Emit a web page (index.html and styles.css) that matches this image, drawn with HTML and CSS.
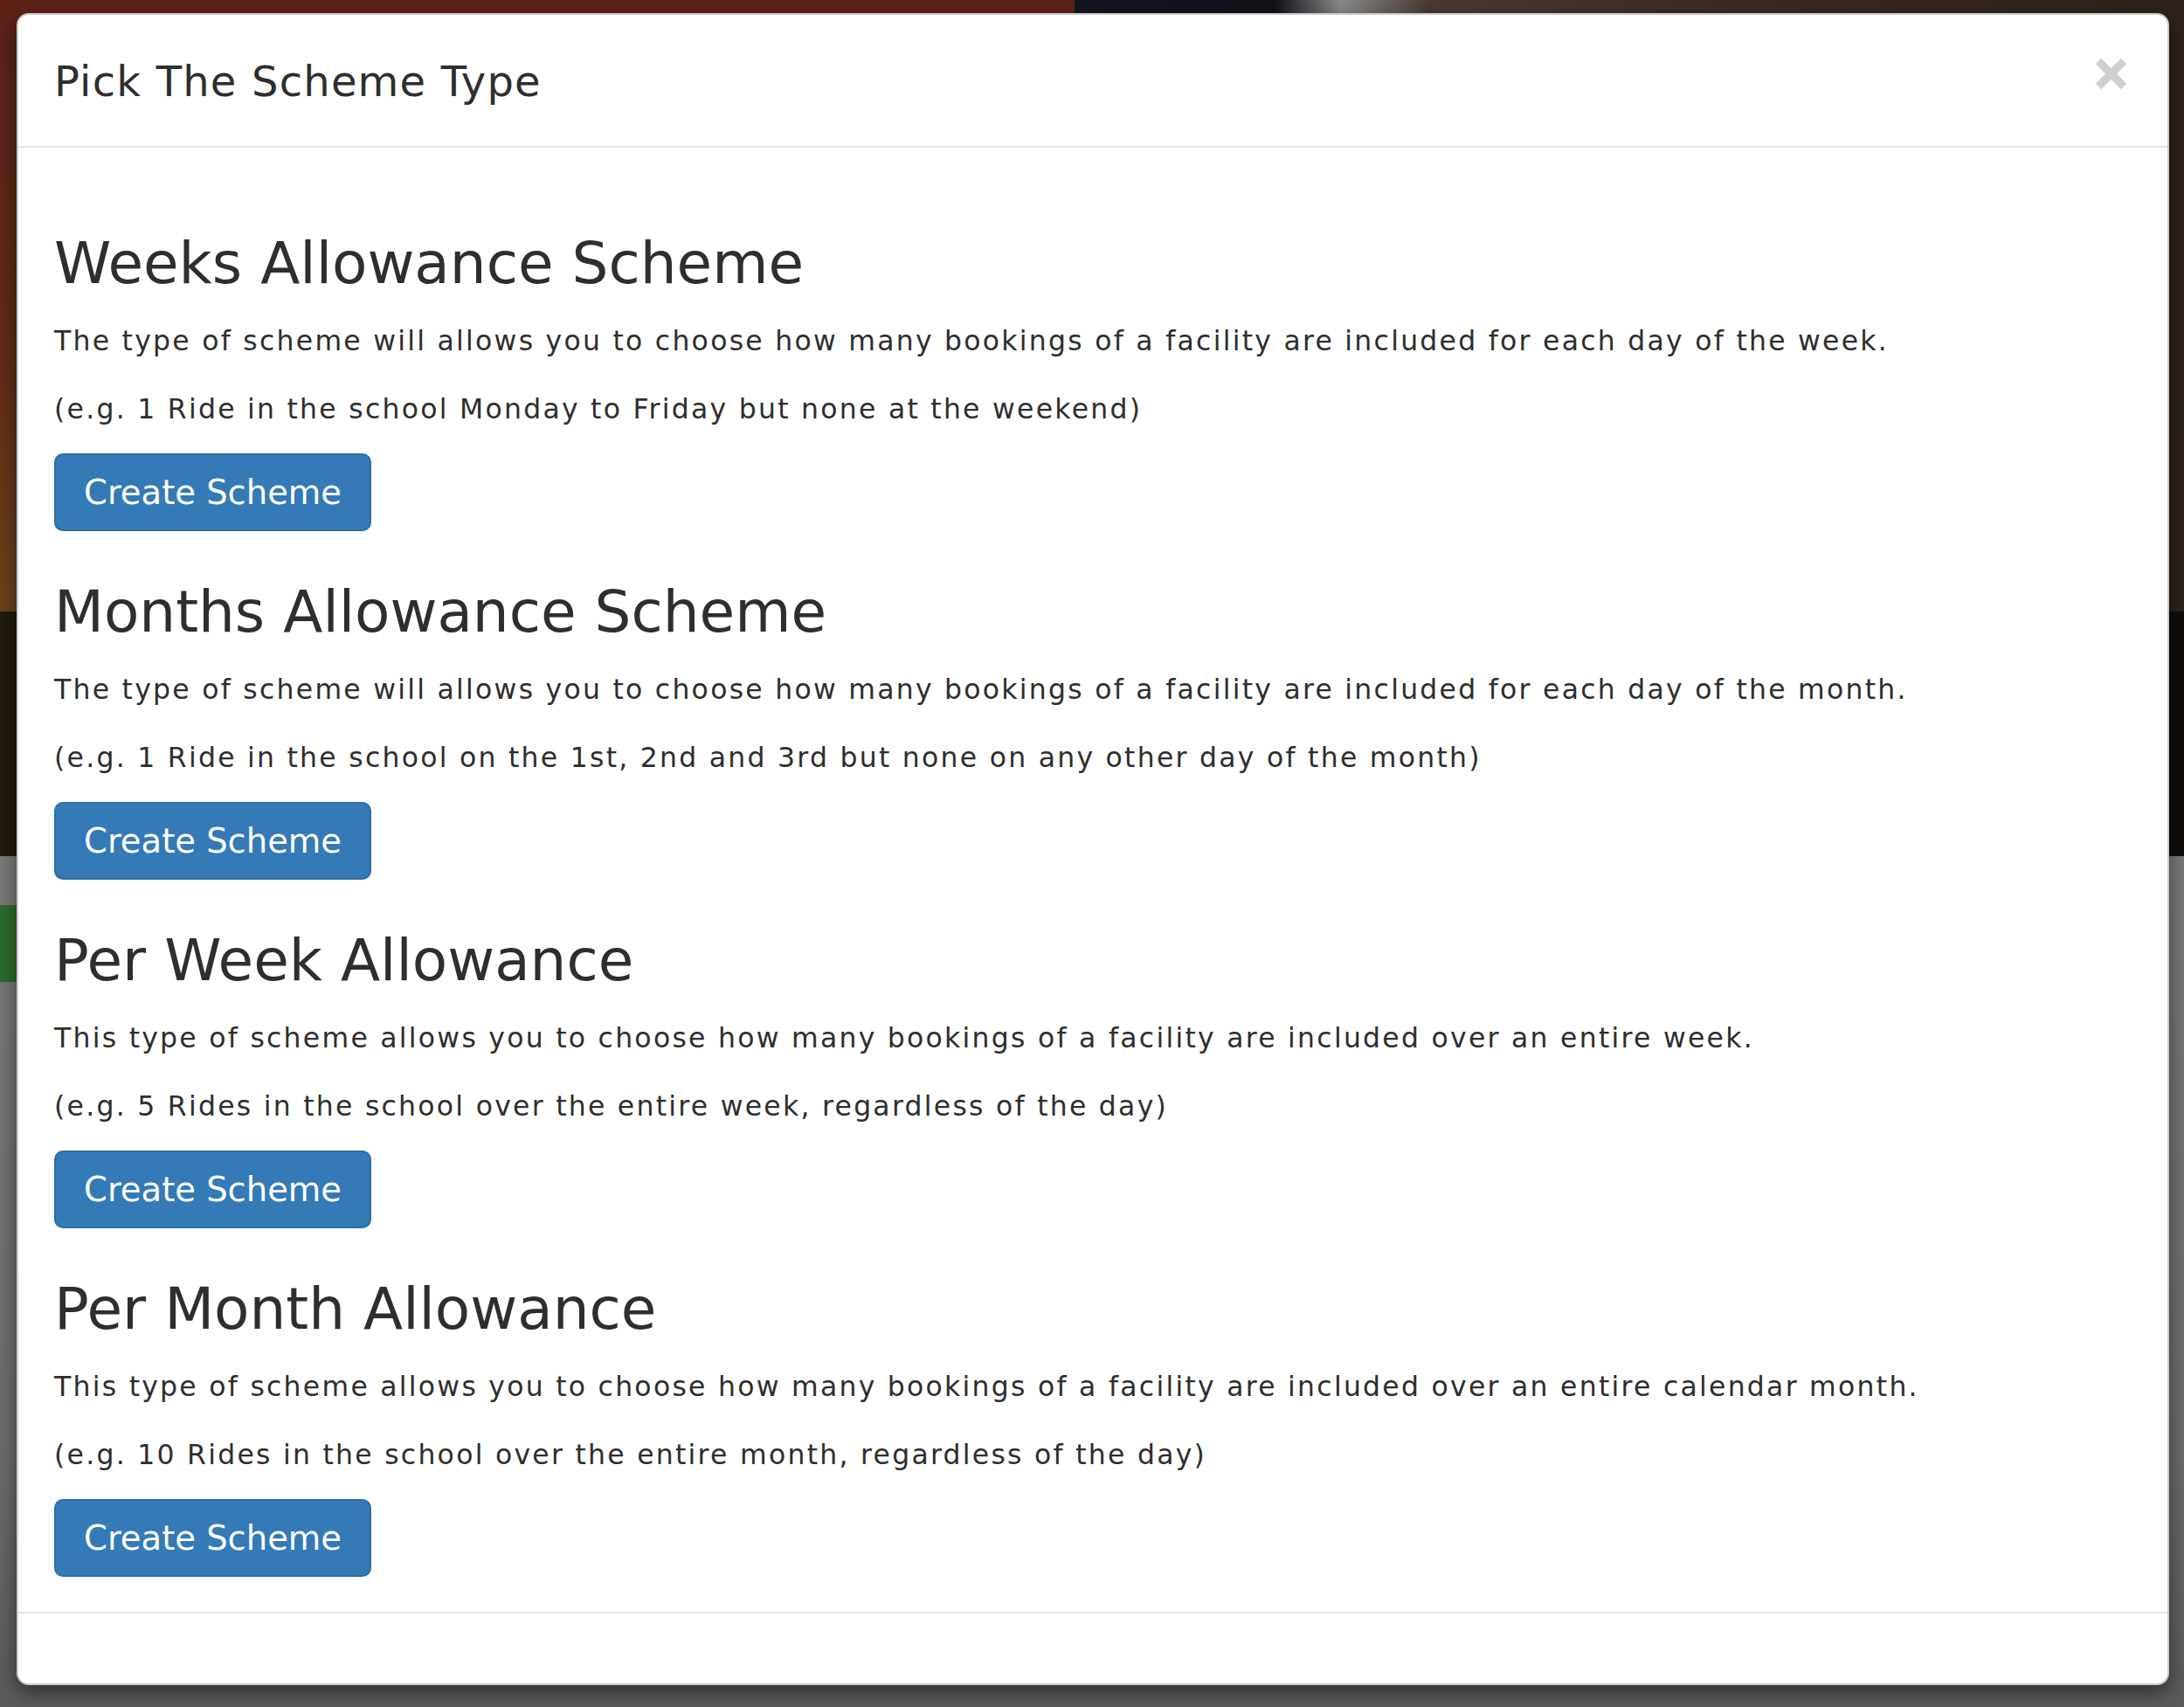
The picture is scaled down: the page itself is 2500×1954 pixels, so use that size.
FILE: index.html
```html
<!DOCTYPE html>
<html lang="en">
<head>
    <meta charset="UTF-8">
    <meta name="viewport" content="width=device-width, initial-scale=1.0">
    <title>Pick The Scheme Type</title>
    <link rel="stylesheet" href="styles.css">
</head>
<body>

    <!-- Page behind the dialog (dimmed by the backdrop) -->
    <div class="page">
        <div class="page-hero">
            <div class="hero-photo"></div>
        </div>
        <div class="hero-band"></div>
        <div class="page-content">
            <div class="green-tab"></div>
        </div>
    </div>

    <!-- Scheme type dialog -->
    <div class="modal">
        <div class="modal-header">
            <h4 class="modal-title">Pick The Scheme Type</h4>
            <button class="close" type="button" aria-label="Close">
                <svg width="37" height="37" viewBox="0 0 37 37">
                    <path d="M4 4 L33 33 M33 4 L4 33" stroke="#cfcfcf" stroke-width="9" fill="none"/>
                </svg>
            </button>
        </div>

        <div class="modal-body">
            <div class="scheme">
                <h2>Weeks Allowance Scheme</h2>
                <p>The type of scheme will allows you to choose how many bookings of a facility are included for each day of the week.</p>
                <p>(e.g. 1 Ride in the school Monday to Friday but none at the weekend)</p>
                <button class="btn-primary" type="button">Create Scheme</button>
            </div>
            <div class="scheme">
                <h2>Months Allowance Scheme</h2>
                <p>The type of scheme will allows you to choose how many bookings of a facility are included for each day of the month.</p>
                <p>(e.g. 1 Ride in the school on the 1st, 2nd and 3rd but none on any other day of the month)</p>
                <button class="btn-primary" type="button">Create Scheme</button>
            </div>
            <div class="scheme">
                <h2>Per Week Allowance</h2>
                <p>This type of scheme allows you to choose how many bookings of a facility are included over an entire week.</p>
                <p>(e.g. 5 Rides in the school over the entire week, regardless of the day)</p>
                <button class="btn-primary" type="button">Create Scheme</button>
            </div>
            <div class="scheme">
                <h2>Per Month Allowance</h2>
                <p>This type of scheme allows you to choose how many bookings of a facility are included over an entire calendar month.</p>
                <p>(e.g. 10 Rides in the school over the entire month, regardless of the day)</p>
                <button class="btn-primary" type="button">Create Scheme</button>
            </div>
        </div>

        <div class="modal-footer"></div>
    </div>

</body>
</html>
```

FILE: styles.css
```css
/* Base styling */
body {
    margin: 0;
    padding: 0;
    font-family: Verdana, "DejaVu Sans", sans-serif;
    color: #2e2e2e;
    background-color: #686868;
    width: 2500px;
    height: 1954px;
    overflow: hidden;
    position: relative;
}

/* Dimmed page behind the dialog */
.page {
    display: flex;
    flex-direction: column;
    height: 100%;
}

.page-hero {
    height: 700px;
    background: linear-gradient(180deg, #5c2216 0%, #622b18 60%, #6a4419 100%);
    display: flex;
    justify-content: flex-end;
}

.hero-photo {
    width: 1270px;
    background: linear-gradient(90deg, #141424 0%, #121018 18%, #8a8a8a 24%, #4a3a32 32%, #3a2a22 60%, #2e221c 100%);
}

.hero-band {
    height: 280px;
    background: linear-gradient(90deg, #211b0c 0%, #1a140c 50%, #100c0a 100%);
}

.page-content {
    flex: 1;
    background: linear-gradient(180deg, #7a7a7a 0%, #6c6c6c 70%, #5a5a5a 100%);
    padding-top: 56px;
}

.green-tab {
    width: 60px;
    height: 88px;
    background-color: #2e6b2c;
}

/* Dialog */
.modal {
    position: absolute;
    top: 15px;
    left: 19px;
    width: 2464px;
    box-sizing: border-box;
    background-color: #fff;
    border: 2px solid rgba(0, 0, 0, 0.2);
    border-radius: 14px;
    box-shadow: 0 8px 22px rgba(0, 0, 0, 0.5);
}

.modal-header {
    display: flex;
    justify-content: space-between;
    align-items: flex-start;
    padding: 42px 42px 40px 41px;
    border-bottom: 2px solid #e5e5e5;
}

.modal-title {
    margin: 0;
    font-size: 48px;
    font-weight: normal;
    line-height: 68px;
    letter-spacing: 1.2px;
}

.close {
    margin: 7px 4px 0 0;
    padding: 0;
    border: none;
    background: none;
    line-height: 0;
    cursor: pointer;
}

.modal-body {
    padding: 40px 42px 40px 41px;
}

.scheme h2 {
    margin: 55px 0 24px;
    font-size: 66px;
    font-weight: normal;
    line-height: 75px;
}

.scheme p {
    margin: 0 0 24px;
    font-size: 31.5px;
    line-height: 54px;
    letter-spacing: 2.25px;
}

/* Button styling */
.btn-primary {
    display: block;
    height: 89px;
    padding: 0 32px;
    font-family: inherit;
    font-size: 38.5px;
    color: #fff;
    background-color: #337ab7;
    border: 2px solid #2e6da4;
    border-radius: 10px;
    cursor: pointer;
}

.modal-footer {
    height: 80px;
    border-top: 2px solid #e5e5e5;
}
```
